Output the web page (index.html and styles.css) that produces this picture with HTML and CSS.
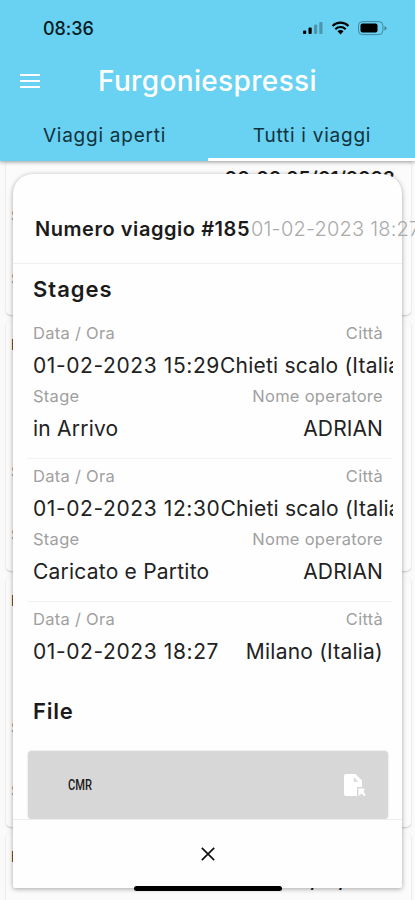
FILE: index.html
```html
<!DOCTYPE html>
<html lang="it">
<head>
<meta charset="utf-8">
<title>Furgoniespressi</title>
<link rel="stylesheet" href="styles.css">
</head>
<body>
<header class="top">
  <div class="status">
    <span class="clock">08:36</span>
    <svg class="status-icons" width="86" height="20" viewBox="0 0 86 20">
      <rect x="1" y="12.5" width="3.2" height="3.5" rx="1"/>
      <rect x="6.5" y="9.5" width="3.2" height="6.5" rx="1"/>
      <g opacity=".28"><rect x="12" y="6.5" width="3.2" height="9.5" rx="1"/><rect x="17.3" y="4" width="3.2" height="12" rx="1"/></g>
      <g fill="none" stroke="#000" stroke-width="2.1"><path d="M30.500 7.900a11.4 11.4 0 0 1 16 0"/><path d="M33.300 11.200a7.4 7.4 0 0 1 10.4 0"/></g>
      <path d="M35.500 13.300a4.2 4.2 0 0 1 6 0L38.500 16.400z"/>
      <rect x="56.5" y="3.600" width="24.4" height="13" rx="4" fill="none" stroke="#000" stroke-opacity=".35"/>
      <rect x="58.5" y="5.600" width="17" height="9" rx="2"/>
      <path d="M82.5 8v4.5q2-.7 2-2.25T82.5 8z" opacity=".4"/>
    </svg>
  </div>
  <div class="bar">
    <svg class="menu" width="20" height="14" viewBox="0 0 20 14"><path d="M0 1h20M0 7h20M0 13h20" stroke="#fff" stroke-width="2"/></svg>
    <h1 class="title">Furgoniespressi</h1>
  </div>
  <nav class="tabs">
    <span class="tab">Viaggi aperti</span>
    <span class="tab active">Tutti i viaggi</span>
  </nav>
</header>
<main class="list">
  <article class="card first">
    <p class="date">00:00 25/01/2023</p>
    <p class="field">S</p>
    <p class="field">S</p>
  </article>
  <article class="card">
    <p class="name">N</p>
    <p class="field">S</p>
    <p class="field">S</p>
  </article>
  <article class="card">
    <p class="name">N</p>
    <p class="field">S</p>
    <p class="field">S</p>
  </article>
  <article class="card last">
    <p class="name">N</p>
    <p class="date low">00:00 25/01/2023</p>
  </article>
</main>
<section class="modal">
  <div class="modal-head"><strong class="trip">Numero viaggio #185</strong><span class="when">01-02-2023 18:27</span></div>
  <div class="content">
    <h2 class="heading">Stages</h2>
    <div class="stage">
      <div class="row label"><span>Data / Ora</span><span>Città</span></div>
      <div class="row value"><span class="v-date">01-02-2023 15:29</span><span>Chieti scalo (Italia)</span></div>
      <div class="row label"><span>Stage</span><span>Nome operatore</span></div>
      <div class="row value"><span>in Arrivo</span><span class="operator">ADRIAN</span></div>
    </div>
    <div class="stage">
      <div class="row label"><span>Data / Ora</span><span>Città</span></div>
      <div class="row value"><span class="v-date">01-02-2023 12:30</span><span>Chieti scalo (Italia)</span></div>
      <div class="row label"><span>Stage</span><span>Nome operatore</span></div>
      <div class="row value"><span>Caricato e Partito</span><span class="operator">ADRIAN</span></div>
    </div>
    <div class="stage end">
      <div class="row label"><span>Data / Ora</span><span>Città</span></div>
      <div class="row value"><span class="v-date">01-02-2023 18:27</span><span>Milano (Italia)</span></div>
    </div>
    <h2 class="heading file">File</h2>
    <div class="doc">
      <span class="doc-name">CMR</span>
      <svg width="22" height="23" viewBox="0 0 22 23"><path fill="#fff" fill-rule="evenodd" d="M2 0h9.500l6.500 6.500v6.500h-5v9H2q-2 0-2-2V2q0-2 2-2zM9.800 3.200v4.600h4.600z"/><path fill="#fff" d="M14.500 14.500h6v1.500l-1 1.200 2 4-1 1-3-2.700-3 2.700z"/></svg>
    </div>
  </div>
  <footer class="close"><svg width="14" height="14" viewBox="0 0 14 14"><path d="M.8.8l12.400 12.400M13.200.8L.8 13.200" stroke="#111" stroke-width="1.7"/></svg></footer>
</section>
<div class="home"></div>
</body>
</html>
```
FILE: styles.css
```css
* { box-sizing: border-box; }
html { height: 900px; overflow: hidden; }
body { margin: 0; width: 415px; height: 900px; overflow: hidden; position: relative; background: #fafafa; font-family: Inter, "Liberation Sans", sans-serif; color: #1b1b1b; }
h1, h2, p { margin: 0; }
.top { height: 161px; background: #69d1f2; position: relative; z-index: 1; box-shadow: 0 1px 4px rgba(0,0,0,.4); }
.status { height: 56px; display: flex; justify-content: space-between; padding: 18px 27px 0 43px; }
.clock { font-size: 18px; font-weight: 500; line-height: 21px; letter-spacing: -.05px; color: #061a20; }
.bar { height: 50px; display: flex; align-items: center; padding-left: 20px; }
.title { margin-left: 58px; font-size: 28px; font-weight: 500; color: #fff; line-height: 34px; letter-spacing: .35px; white-space: nowrap; }
.tabs { height: 55px; display: grid; grid-template-columns: 208px 207px; text-align: center; }
.tab { font-size: 19px; line-height: 59px; color: #12333d; letter-spacing: .75px; height: 55px; padding-left: 1px; white-space: nowrap; }
.active { border-bottom: 3px solid #fff; }
.list { height: 739px; overflow: hidden; padding: 0 4px 0 6px; }
.card { height: 250px; margin-bottom: 6px; border-radius: 5px; background: #fbfbfb; box-shadow: 0 1px 2px rgba(0,0,0,.2); padding-left: 5px; overflow: hidden; }
.first { height: 154px; }
.last { height: 73px; margin-bottom: 0; }
.name { font-size: 15px; font-weight: 500; line-height: 48px; height: 119px; }
.field { font-size: 15px; color: #999; line-height: 63px; height: 63px; }
.date { font-size: 19px; font-weight: 600; line-height: 24px; height: 23px; text-align: right; padding: 6px 16px 0 0; letter-spacing: .15px; }
.low { margin-top: -82px; padding-top: 0; }
.modal { position: absolute; z-index: 2; left: 13px; top: 174px; width: 389px; height: 714px; background: #fefefe; border-radius: 20px 20px 2px 2px; box-shadow: 0 1px 5px rgba(0,0,0,.35); display: flex; flex-direction: column; }
.modal-head { height: 90px; border-bottom: 1px solid #f0f0f0; padding: 20px 0 0 22px; line-height: 70px; display: flex; white-space: nowrap; }
.trip { font-size: 20px; font-weight: 600; letter-spacing: .55px; width: 216px; flex: none; }
.when { font-size: 20px; font-weight: 350; color: #aaa; letter-spacing: .2px; }
.content { height: 555px; margin-right: 9px; padding: 0 1px 0 14px; overflow: hidden; }
.heading { font-size: 22px; font-weight: 600; line-height: 50px; height: 52px; padding-left: 6px; letter-spacing: 1px; }
.file { letter-spacing: .8px; }
.stage { height: 143px; padding: 2px 0 14px 6px; border-bottom: 1px solid #f2f2f2; }
.row { display: flex; justify-content: space-between; height: 31.5px; line-height: 31.5px; padding-right: 9px; white-space: nowrap; }
.label { font-size: 16.5px; font-weight: 400; color: #a0a0a0; line-height: 31px; letter-spacing: .28px; }
.value { font-size: 21px; font-weight: 400; letter-spacing: .22px; color: #222; }
.v-date { letter-spacing: .6px; }
.operator { letter-spacing: .1px; }
.end { height: 84px; border: 0; padding-bottom: 0; }
.doc { height: 68px; margin: 13px 4px 0 1px; border-radius: 4px; background: #d8d7d7; box-shadow: 0 0 2px rgba(0,0,0,.2); display: flex; justify-content: space-between; align-items: center; padding: 0 22px 0 40px; }
.doc-name { font: 500 15px/20px Roboto, sans-serif; transform: scaleX(.74); transform-origin: left; }
.close { flex: 1; border-top: 1px solid #eee; display: flex; justify-content: center; align-items: center; }
.home { position: absolute; z-index: 3; left: 134px; top: 886px; width: 148px; height: 5px; border-radius: 3px; background: #000; }
```
